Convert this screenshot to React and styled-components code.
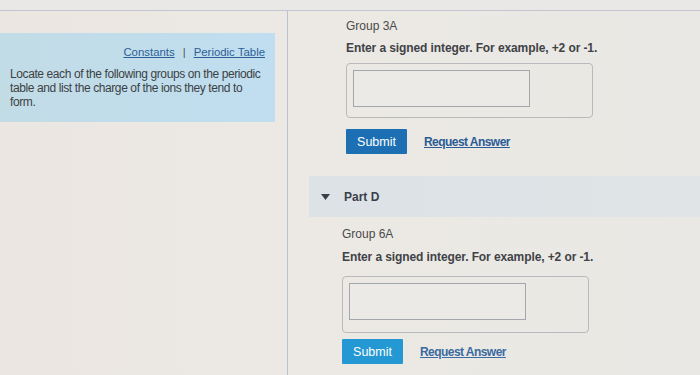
import React from "react";
import styled, { createGlobalStyle } from "styled-components";

const Global = createGlobalStyle`
  html, body { margin: 0; padding: 0; }
  body {
    background: #ebe8e3;
    font-family: "Liberation Sans", Arial, sans-serif;
    width: 700px;
    height: 375px;
    overflow: hidden;
  }
`;

const Page = styled.div`
  width: 700px;
  height: 375px;
  display: flex;
  flex-direction: column;
  background: linear-gradient(90deg, #ebe6e1 0%, #ece9e4 45%, #e9e8e4 100%);
`;

const TopStrip = styled.div`
  height: 10px;
  background: #e9e8e6;
  border-bottom: 1px solid #c4c7d2;
  flex: none;
`;

const Main = styled.div`
  flex: 1;
  display: flex;
  min-height: 0;
`;

const LeftPane = styled.aside`
  width: 288px;
  flex: none;
  border-right: 1px solid #b9c3d6;
  padding-top: 22px;
  box-sizing: border-box;
`;

const InfoBox = styled.div`
  width: 275px;
  height: 89px;
  box-sizing: border-box;
  background: linear-gradient(90deg, #c2dce6 0%, #c0def0 100%);
  padding: 13px 8px 0 10px;
`;

const LinkRow = styled.div`
  display: flex;
  justify-content: flex-end;
  align-items: center;
  gap: 8px;
  padding-right: 2px;
  font-size: 11.4px;
  color: #555;
  margin-bottom: 9px;
`;

const Link = styled.a`
  color: ${(p) => p.$color || "#2b5f98"};
  text-decoration: underline;
  font-weight: ${(p) => (p.$bold ? 700 : 400)};
  font-size: ${(p) => (p.$bold ? "12px" : "11.4px")};
  letter-spacing: ${(p) => (p.$bold ? "-0.55px" : "0")};
  cursor: pointer;
`;

const InfoText = styled.p`
  margin: 0;
  font-size: 12px;
  line-height: 14px;
  letter-spacing: -0.4px;
  color: #3c3f44;
`;

const RightPane = styled.section`
  flex: 1;
  display: flex;
  flex-direction: column;
  padding-top: 8px;
`;

const PartBody = styled.div`
  padding-left: ${(p) => p.$indent}px;
  display: flex;
  flex-direction: column;
  align-items: flex-start;
`;

const GroupLabel = styled.div`
  font-size: 12px;
  line-height: 15px;
  color: #4a4a4a;
`;

const Prompt = styled.div`
  margin-top: ${(p) => p.$gap}px;
  font-size: 12px;
  line-height: 15px;
  font-weight: 700;
  color: #3f4247;
  letter-spacing: -0.1px;
`;

const AnswerBox = styled.div`
  margin-top: ${(p) => p.$gap}px;
  width: 247px;
  height: ${(p) => p.$h}px;
  box-sizing: border-box;
  border: 1px solid #b7b9bd;
  border-radius: 4px;
  padding: 6px;
`;

const Input = styled.div`
  width: 177px;
  height: 37px;
  box-sizing: border-box;
  border: 1px solid #a3a6ab;
  background: #eceae6;
`;

const Actions = styled.div`
  margin-top: ${(p) => p.$gap}px;
  display: flex;
  align-items: center;
  gap: 17px;
`;

const SubmitButton = styled.button`
  width: 61px;
  height: 25px;
  border: none;
  border-radius: 1px;
  background: ${(p) => p.$bg};
  color: #fff;
  font-family: inherit;
  font-size: 12.5px;
  padding: 0;
`;

const PartHeader = styled.div`
  margin-top: 22px;
  margin-left: 21px;
  height: 41px;
  display: flex;
  align-items: center;
  gap: 14px;
  padding-left: 12px;
  background: linear-gradient(90deg, #dde2e7 0%, #e0e4e6 100%);
  font-size: 12px;
  font-weight: 700;
  color: #3a3f4a;
`;

const Caret = styled.svg`
  width: 9px;
  height: 6px;
  flex: none;
`;

const PartGap = styled.div`
  height: 10px;
`;

function Part({ indent, group, bg, linkColor, promptGap, boxGap, boxH, actionsGap }) {
  return (
    <PartBody $indent={indent}>
      <GroupLabel>{group}</GroupLabel>
      <Prompt $gap={promptGap}>Enter a signed integer. For example, +2 or -1.</Prompt>
      <AnswerBox $gap={boxGap} $h={boxH}>
        <Input />
      </AnswerBox>
      <Actions $gap={actionsGap}>
        <SubmitButton $bg={bg}>Submit</SubmitButton>
        <Link $bold $color={linkColor}>Request Answer</Link>
      </Actions>
    </PartBody>
  );
}

export default function App() {
  return (
    <>
      <Global />
      <Page>
        <TopStrip />
        <Main>
          <LeftPane>
            <InfoBox>
              <LinkRow>
                <Link>Constants</Link>
                <span>|</span>
                <Link>Periodic Table</Link>
              </LinkRow>
              <InfoText>
                Locate each of the following groups on the periodic table and
                list the charge of the ions they tend to form.
              </InfoText>
            </InfoBox>
          </LeftPane>
          <RightPane>
            <Part
              indent={58}
              group="Group 3A"
              bg="#1d6fb3"
              linkColor="#2a5b95"
              promptGap={7}
              boxGap={7}
              boxH={55}
              actionsGap={11}
            />
            <PartHeader>
              <Caret viewBox="0 0 9 6">
                <path d="M0 0 L9 0 L4.5 6 Z" fill="#3a3f4a" />
              </Caret>
              <span>Part D</span>
            </PartHeader>
            <PartGap />
            <Part
              indent={54}
              group="Group 6A"
              bg="#2398d2"
              linkColor="#3a6aa0"
              promptGap={8}
              boxGap={11}
              boxH={57}
              actionsGap={6}
            />
          </RightPane>
        </Main>
      </Page>
    </>
  );
}
